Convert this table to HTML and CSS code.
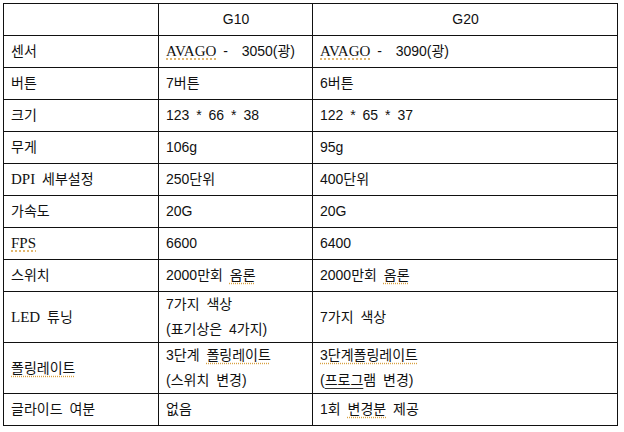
FILE: index.html
```html
<!DOCTYPE html>
<html lang="ko">
<head>
<meta charset="utf-8">
<link rel="stylesheet" href="styles.css">
</head>
<body>
<div class="page">
<table class="spec">
  <colgroup><col class="c1"><col class="c2"><col class="c3"></colgroup>
  <tr class="head"><td></td><td class="center">G10</td><td class="center">G20</td></tr>
  <tr><td>센서</td><td><span class="lat spell">AVAGO</span> - &nbsp;3050(광)</td><td><span class="lat spell">AVAGO</span> - &nbsp;3090(광)</td></tr>
  <tr><td>버튼</td><td>7버튼</td><td>6버튼</td></tr>
  <tr><td>크기</td><td>123 * 66 * 38</td><td>122 * 65 * 37</td></tr>
  <tr><td>무게</td><td>106g</td><td>95g</td></tr>
  <tr><td><span class="lat">DPI</span> 세부설정</td><td>250단위</td><td>400단위</td></tr>
  <tr><td>가속도</td><td>20G</td><td>20G</td></tr>
  <tr><td><span class="lat spell">FPS</span></td><td>6600</td><td>6400</td></tr>
  <tr><td>스위치</td><td>2000만회 <span class="spell">옴론</span></td><td>2000만회 <span class="spell">옴론</span></td></tr>
  <tr class="tall"><td><span class="lat">LED</span> 튜닝</td><td>7가지 색상<br>(표기상은 4가지)</td><td>7가지 색상</td></tr>
  <tr class="tall"><td><span class="spell">폴링레이트</span></td><td>3단계 <span class="spell">폴링레이트</span><br>(스위치 변경)</td><td><span class="spell">3단계폴링레이트</span><br>(<span class="uline">프로그</span>램 변경)</td></tr>
  <tr><td>글라이드 여분</td><td>없음</td><td>1회 <span class="spell">변경분</span> 제공</td></tr>
</table>
</div>
</body>
</html>
```

FILE: styles.css
```css
html, body {
  margin: 0;
  padding: 0;
  background: #ffffff;
}
.page {
  padding: 3px 0 0 3px;
}
.spec {
  border-collapse: collapse;
  table-layout: fixed;
  width: 614px;
  font-family: "Liberation Sans", "Noto Sans CJK KR", sans-serif;
  font-size: 14px;
  color: #111111;
  word-spacing: 3px;
}
.c1 { width: 155px; }
.c2 { width: 154px; }
.c3 { width: 305px; }
.spec td {
  border: 1px solid #111111;
  height: 31px;
  padding: 0 6px 0 7px;
  vertical-align: middle;
  line-height: 25px;
  white-space: nowrap;
}
.spec tr.tall td {
  height: 50px;
}
.spec td.center {
  text-align: center;
}
.lat {
  font-family: "Liberation Serif", serif;
  font-size: 15px;
  word-spacing: 0;
}
.spell {
  text-decoration: underline dotted #d8a040;
  text-underline-offset: 3px;
}
.uline {
  text-decoration: underline solid #333333;
  text-underline-offset: 3px;
}
```
